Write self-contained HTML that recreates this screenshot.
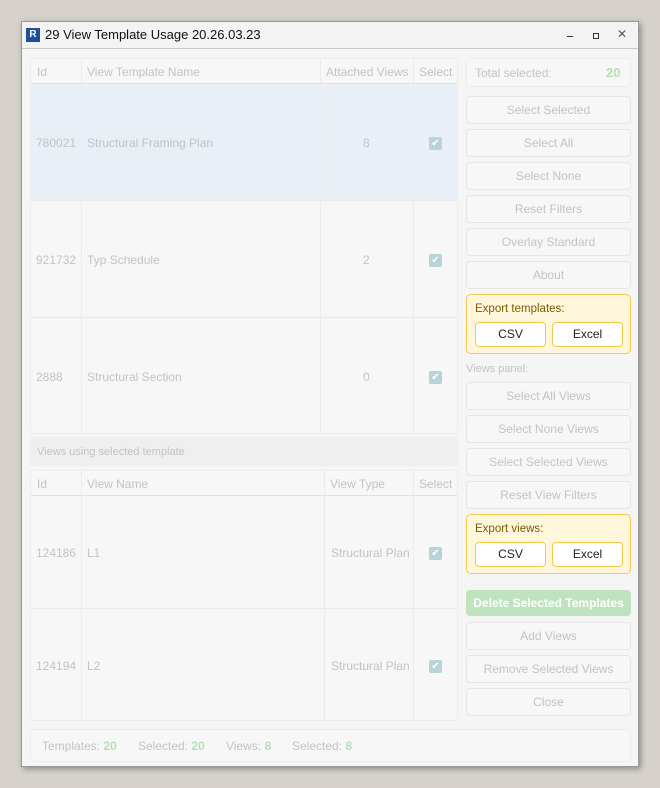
<!DOCTYPE html>
<html><head><meta charset="utf-8"><style>
*{box-sizing:border-box;margin:0;padding:0}
body{width:660px;height:788px;background:#d6d2cb;font-family:"Liberation Sans",sans-serif;font-size:12px;position:relative;overflow:hidden}
.a{position:absolute}
.win{left:21px;top:21px;width:618px;height:746px;background:#f5f5f5;border:1px solid #9a9a9a;box-shadow:2px 2px 6px rgba(0,0,0,.35)}
.title{left:0;top:0;width:616px;height:27px;background:#f3f3f3;border-bottom:1px solid #c8c8c8}
.g{color:#c3c3c3}
.tbl{background:#f7f7f7;border:1px solid #ececec;border-radius:4px}
.vl{position:absolute;top:0;bottom:0;width:1px;background:#ececec}
.hl{position:absolute;left:0;right:0;height:1px;background:#eaeaea}
.btn{position:absolute;left:466px;width:165px;height:28px;border:1px solid #e6e6e6;border-radius:4px;background:#f7f7f7;color:#c3c3c3;text-align:center;line-height:26px}
.chk{position:absolute;width:13px;height:13px;background:#b9d3d9;border-radius:2px;color:#fff;font-size:10px;line-height:13px;text-align:center}
.exp{position:absolute;left:466px;width:165px;background:#fff6dc;border:1px solid #f5c84a;border-radius:5px}
.eb{position:absolute;top:27px;width:71px;height:25px;background:#fff;border:1px solid #f5c84a;border-radius:4px;text-align:center;line-height:23px;color:#222}
.gn{color:#b8e0b8;font-weight:bold}
</style></head><body>
<div class="a win"></div>
<div class="a title" style="left:22px;top:22px;width:616px"></div>
<div class="a" style="left:26px;top:28px;width:14px;height:14px;background:#1e4f9c;color:#fff;font-size:10px;font-weight:bold;text-align:center;line-height:14px">R</div>
<div class="a" style="left:45px;top:27px;font-size:13px;color:#111">29 View Template Usage 20.26.03.23</div>
<div class="a" style="left:567px;top:36px;width:6px;height:1px;background:#333"></div>
<div class="a" style="left:593px;top:33px;width:6px;height:6px;border:1px solid #333"></div>
<div class="a" style="left:617px;top:27px;color:#555;font-size:12px">✕</div>

<!-- top grid -->
<div class="a tbl" style="left:30px;top:58px;width:428px;height:376px">
<div class="a" style="left:0;top:25px;width:426px;height:117px;background:#e8eff6"></div>
<div class="vl" style="left:50px"></div><div class="vl" style="left:289px"></div><div class="vl" style="left:382px"></div>
<div class="hl" style="top:24px;background:#e0e0e0"></div><div class="hl" style="top:141px"></div><div class="hl" style="top:258px"></div>
<div class="a g" style="left:6px;top:6px">Id</div><div class="a g" style="left:56px;top:6px">View Template Name</div><div class="a g" style="left:295px;top:6px">Attached Views</div><div class="a g" style="left:388px;top:6px">Select</div>
<div class="a g" style="left:5px;top:77px">780021</div><div class="a g" style="left:56px;top:77px">Structural Framing Plan</div><div class="a g" style="left:332px;top:77px">8</div>
<div class="a g" style="left:5px;top:194px">921732</div><div class="a g" style="left:56px;top:194px">Typ Schedule</div><div class="a g" style="left:332px;top:194px">2</div>
<div class="a g" style="left:5px;top:311px">2888</div><div class="a g" style="left:56px;top:311px">Structural Section</div><div class="a g" style="left:332px;top:311px">0</div>
<div class="chk" style="left:398px;top:78px">✔</div><div class="chk" style="left:398px;top:195px">✔</div><div class="chk" style="left:398px;top:312px">✔</div>
</div>
<div class="a" style="left:30px;top:437px;width:428px;height:29px;background:#efefef"></div>
<div class="a g" style="left:37px;top:446px;font-size:11px">Views using selected template</div>
<div class="a tbl" style="left:30px;top:470px;width:428px;height:251px">
<div class="vl" style="left:50px"></div><div class="vl" style="left:293px"></div><div class="vl" style="left:382px"></div>
<div class="hl" style="top:24px;background:#e0e0e0"></div><div class="hl" style="top:137px"></div>
<div class="a g" style="left:6px;top:6px">Id</div><div class="a g" style="left:56px;top:6px">View Name</div><div class="a g" style="left:299px;top:6px">View Type</div><div class="a g" style="left:388px;top:6px">Select</div>
<div class="a g" style="left:5px;top:75px">124186</div><div class="a g" style="left:56px;top:75px">L1</div><div class="a g" style="left:300px;top:75px">Structural Plan</div>
<div class="a g" style="left:5px;top:188px">124194</div><div class="a g" style="left:56px;top:188px">L2</div><div class="a g" style="left:300px;top:188px">Structural Plan</div>
<div class="chk" style="left:398px;top:76px">✔</div><div class="chk" style="left:398px;top:189px">✔</div>
</div>

<!-- right -->
<div class="a" style="left:466px;top:58px;width:165px;height:29px;border:1px solid #ececec;border-radius:5px;background:#f7f7f7"></div>
<div class="a g" style="left:475px;top:66px">Total selected:</div><div class="a gn" style="left:606px;top:65px;font-size:13px">20</div>
<div class="btn" style="top:96px">Select Selected</div>
<div class="btn" style="top:129px">Select All</div>
<div class="btn" style="top:162px">Select None</div>
<div class="btn" style="top:195px">Reset Filters</div>
<div class="btn" style="top:228px">Overlay Standard</div>
<div class="btn" style="top:261px">About</div>
<div class="exp" style="top:294px;height:60px"><div class="a" style="left:8px;top:8px;color:#7a5c00;font-size:11.5px">Export templates:</div><div class="eb" style="left:8px">CSV</div><div class="eb" style="left:85px">Excel</div></div>
<div class="a g" style="left:466px;top:363px;font-size:11px">Views panel:</div>
<div class="btn" style="top:382px">Select All Views</div>
<div class="btn" style="top:415px">Select None Views</div>
<div class="btn" style="top:448px">Select Selected Views</div>
<div class="btn" style="top:481px">Reset View Filters</div>
<div class="exp" style="top:514px;height:60px"><div class="a" style="left:8px;top:8px;color:#7a5c00;font-size:11.5px">Export views:</div><div class="eb" style="left:8px">CSV</div><div class="eb" style="left:85px">Excel</div></div>
<div class="btn" style="top:590px;height:26px;background:#bfe3bf;border-color:#bfe3bf;color:#fff;font-weight:bold;line-height:25px">Delete Selected Templates</div>
<div class="btn" style="top:622px">Add Views</div>
<div class="btn" style="top:655px">Remove Selected Views</div>
<div class="btn" style="top:688px">Close</div>

<div class="a" style="left:30px;top:729px;width:601px;height:33px;border:1px solid #ececec;border-radius:5px;background:#f7f7f7"></div>
<div class="a g" style="left:42px;top:739px">Templates: <span class="gn">20</span></div>
<div class="a g" style="left:138px;top:739px">Selected: <span class="gn">20</span></div>
<div class="a g" style="left:226px;top:739px">Views: <span class="gn">8</span></div>
<div class="a g" style="left:292px;top:739px">Selected: <span class="gn">8</span></div>
</body></html>
